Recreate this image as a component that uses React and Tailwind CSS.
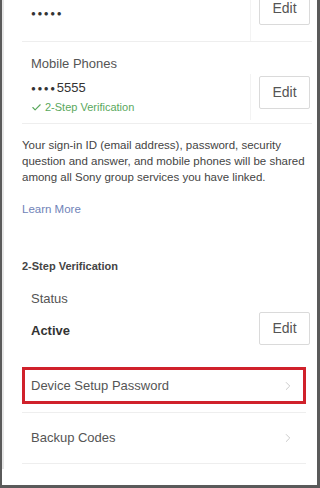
import React from 'react'
import { Check, ChevronRight } from 'lucide-react'

function EditButton({ className = '' }) {
  return (
    <button className={`w-[51px] h-[33px] shrink-0 border border-[#dadada] rounded-[2px] bg-white text-[14px] text-[#555] ${className}`}>
      Edit
    </button>
  )
}

function Dots({ count }) {
  return (
    <span className="text-[8px] tracking-[1.6px] align-[1px] text-[#333]">{'●'.repeat(count)}</span>
  )
}

function LinkRow({ label, highlighted }) {
  return (
    <div
      className={`flex items-center justify-between mr-[6px] ${
        highlighted
          ? 'h-[37px] border-[3px] border-[#d0212b] pl-[6px] pr-[8px]'
          : 'h-[51px] border-b border-[#eeeeee] pl-[9px] pr-[11px]'
      }`}
    >
      <span className="text-[13px] leading-[20px] text-[#555]">{label}</span>
      <ChevronRight size={14} strokeWidth={1.5} className="text-[#c4c4c4]" />
    </div>
  )
}

export default function App() {
  return (
    <div
      className="w-[320px] h-[488px] overflow-hidden bg-white border-l-2 border-r-[3px] border-b-[3px] border-[#5a5a5a]"
      style={{ fontFamily: '"Liberation Sans", Arial, sans-serif' }}
    >
      <div className="h-full border-l-2 border-[#e6e6e6] pl-[18px] pr-[5px]">
        {/* Password row (scrolled) */}
        <div className="-mt-[16px] h-[58px] flex justify-between border-b border-[#eeeeee] pl-[9px] pr-[2px]">
          <div className="mt-[19px] text-[13px] leading-[20px]">
            <Dots count={5} />
          </div>
          <div className="flex border-l border-[#f3f3f3] pl-[8px]">
            <EditButton className="mt-[8px]" />
          </div>
        </div>

        {/* Mobile phones */}
        <div className="h-[82px] flex justify-between border-b border-[#eeeeee] pl-[9px] pr-[2px]">
          <div className="pt-[12px]">
            <div className="text-[13px] leading-[20px] text-[#555]">Mobile Phones</div>
            <div className="mt-[4px] text-[13px] leading-[20px] text-[#333]">
              <Dots count={4} />5555
            </div>
            <div className="flex items-center gap-[3px] text-[11px] leading-[16px] text-[#5aa85d]">
              <Check size={11} strokeWidth={2.5} />
              2-Step Verification
            </div>
          </div>
          <div className="flex border-l border-[#f3f3f3] pl-[8px] mt-[32px] mb-[3px]">
            <EditButton className="mt-[2px]" />
          </div>
        </div>

        <p className="pt-[13px] -mr-[4px] text-[11.5px] leading-[16px] text-[#444]">
          Your sign-in ID (email address), password, security question and answer, and mobile phones will be shared among all Sony group services you have linked.
        </p>

        <div className="mt-[16px] text-[11.5px] leading-[16px] text-[#7083b8]">Learn More</div>

        <div className="mt-[41px] text-[11px] leading-[16px] font-bold text-[#444]">2-Step Verification</div>

        {/* Status */}
        <div className="mt-[15px] flex justify-between pl-[9px] pr-[2px]">
          <div>
            <div className="text-[13px] leading-[20px] text-[#555]">Status</div>
            <div className="mt-[12px] text-[13px] leading-[20px] font-bold text-[#333]">Active</div>
          </div>
          <EditButton className="mt-[23px]" />
        </div>

        <div className="mt-[22px] flex flex-col">
          <LinkRow label="Device Setup Password" highlighted />
          <div className="mt-[8px] mr-[6px] border-b border-[#eeeeee]" />
          <LinkRow label="Backup Codes" />
        </div>
      </div>
    </div>
  )
}
